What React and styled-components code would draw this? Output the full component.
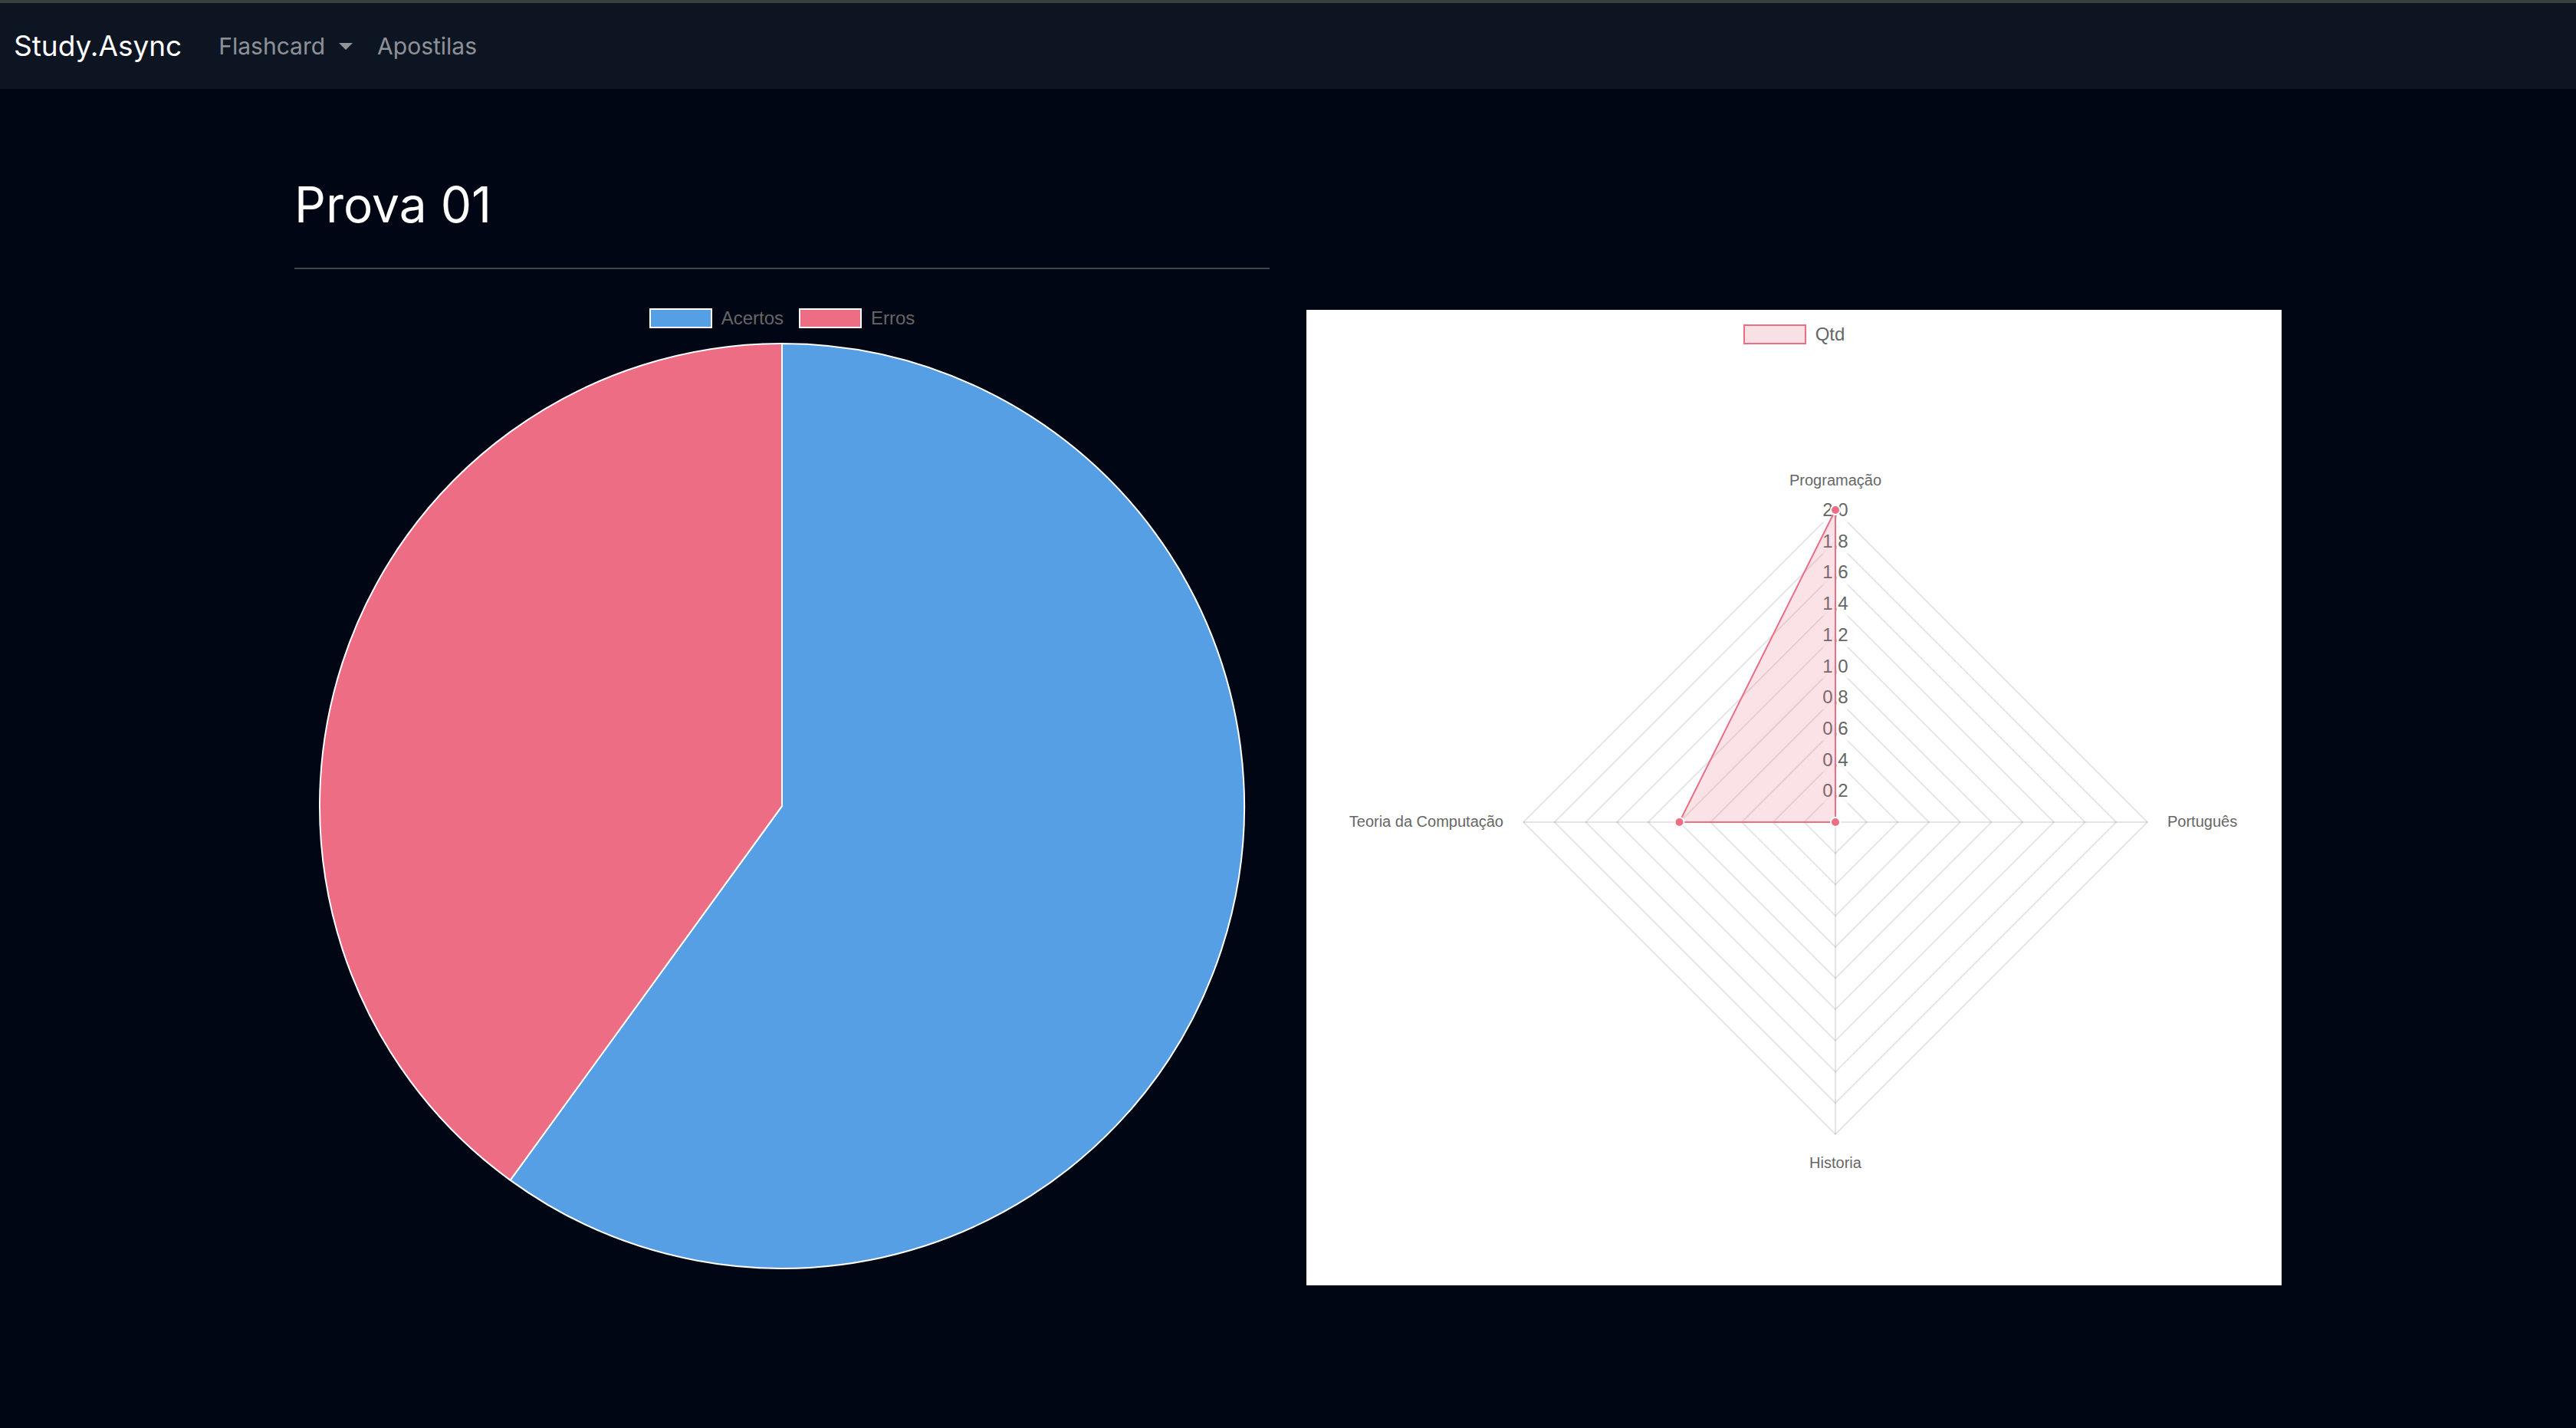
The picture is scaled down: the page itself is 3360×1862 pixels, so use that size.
import React from "react";
import styled, { createGlobalStyle } from "styled-components";

const colors = {
  page: "#000613",
  nav: "#0d1422",
  blue: "#579fe5",
  pink: "#ec6d84",
  label: "#666666",
};

const chartFont = `"Liberation Sans", Arial, sans-serif`;

const GlobalStyle = createGlobalStyle`
  *, *::before, *::after { box-sizing: border-box; }
  body {
    margin: 0;
    background: ${colors.page};
    color: #fff;
    font-family: Inter, Roboto, sans-serif;
  }
`;

const Navbar = styled.nav`
  display: flex;
  align-items: center;
  height: 116px;
  padding: 0 18px;
  background: ${colors.nav};
  border-top: 4px solid #38413d;
`;

const Brand = styled.a`
  margin-right: 48px;
  color: #fff;
  font-size: 37px;
  line-height: 60px;
  text-decoration: none;
`;

const NavList = styled.ul`
  display: flex;
  gap: 32px;
  margin: 0;
  padding: 0;
  list-style: none;
`;

const NavLink = styled.a`
  display: flex;
  align-items: center;
  gap: 18px;
  padding: 0;
  border: 0;
  background: none;
  color: rgba(255, 255, 255, 0.55);
  font: inherit;
  font-size: 30px;
  line-height: 48px;
  text-decoration: none;
  cursor: pointer;
`;

const Caret = styled.span`
  border-top: 9px solid currentColor;
  border-left: 9px solid transparent;
  border-right: 9px solid transparent;
`;

const Container = styled.main`
  display: grid;
  grid-template-columns: 1fr 1fr;
  align-items: start;
  gap: 48px;
  max-width: 2640px;
  margin: 0 auto;
  padding: 108px 24px 96px;
`;

const Title = styled.h1`
  margin: 0;
  font-size: 64px;
  font-weight: 400;
  line-height: 86px;
`;

const Divider = styled.hr`
  height: 2px;
  margin: 39px 0 32px;
  border: 0;
  background: #43464d;
`;

const Chart = styled.figure`
  margin: 0;
  font-family: ${chartFont};
`;

const RadarCard = styled(Chart)`
  margin-top: 180px;
  background: #fff;
`;

const Legend = styled.figcaption`
  display: flex;
  justify-content: center;
  gap: 20px;
  height: 64px;
  padding-top: 19px;
`;

const LegendItem = styled.span`
  display: flex;
  gap: 12px;
  height: 26px;
  color: ${colors.label};
  font-size: 24px;
  line-height: 26px;
`;

const Swatch = styled.span`
  width: 82px;
  border: 2px solid ${(p) => p.$border};
  background: ${(p) => p.$fill};
`;

const Plot = styled.svg`
  display: block;
  width: 100%;
  height: auto;
`;

const TickText = styled.text`
  fill: ${colors.label};
  font-size: 24px;
  text-anchor: middle;
`;

const PointLabel = styled.text`
  fill: ${colors.label};
  font-size: 20px;
`;

const RESULTS = [
  { label: "Acertos", value: 3, color: colors.blue },
  { label: "Erros", value: 2, color: colors.pink },
];

function PieChart() {
  const cx = 636;
  const cy = 604;
  const r = 603;
  const total = RESULTS.reduce((sum, d) => sum + d.value, 0);
  const at = (share) => {
    const a = share * 2 * Math.PI;
    return `${cx + r * Math.sin(a)} ${cy - r * Math.cos(a)}`;
  };
  let start = 0;
  const slices = RESULTS.map((d) => {
    const end = start + d.value / total;
    const large = end - start > 0.5 ? 1 : 0;
    const path = `M${cx} ${cy}L${at(start)}A${r} ${r} 0 ${large} 1 ${at(end)}Z`;
    start = end;
    return { ...d, path };
  });
  return (
    <Chart>
      <Legend>
        {RESULTS.map((d) => (
          <LegendItem key={d.label}>
            <Swatch $border="#fff" $fill={d.color} />
            {d.label}
          </LegendItem>
        ))}
      </Legend>
      <Plot viewBox="0 0 1272 1208" role="img" aria-label="Acertos e erros">
        {slices.map((s) => (
          <path key={s.label} d={s.path} fill={s.color} stroke="#fff" strokeWidth="2" strokeLinejoin="bevel" />
        ))}
      </Plot>
    </Chart>
  );
}

const SUBJECTS = [
  { label: "Programação", value: 2, x: 690, y: 165, anchor: "middle" },
  { label: "Português", value: 0, x: 1123, y: 610, anchor: "start" },
  { label: "Historia", value: 0, x: 690, y: 1055, anchor: "middle" },
  { label: "Teoria da Computação", value: 1, x: 257, y: 610, anchor: "end" },
];

function RadarChart() {
  const cx = 690;
  const cy = 604;
  const radius = 407;
  const max = 2;
  const directions = [[0, -1], [1, 0], [0, 1], [-1, 0]];
  const steps = Array.from({ length: 10 }, (_, i) => (i + 1) / 5);
  const point = (value, i) => {
    const d = (value / max) * radius;
    return [cx + directions[i][0] * d, cy + directions[i][1] * d];
  };
  const data = SUBJECTS.map((s, i) => point(s.value, i));
  return (
    <RadarCard>
      <Legend>
        <LegendItem>
          <Swatch $border={colors.pink} $fill="#f9e0e4" />
          Qtd
        </LegendItem>
      </Legend>
      <Plot viewBox="0 0 1272 1208" role="img" aria-label="Quantidade por matéria">
        <g fill="none" stroke="#000" strokeOpacity="0.1" strokeWidth="2">
          {steps.map((v) => (
            <polygon key={v} points={directions.map((_, i) => point(v, i).join(",")).join(" ")} />
          ))}
          {directions.map((_, i) => {
            const [x, y] = point(max, i);
            return <line key={i} x1={cx} y1={cy} x2={x} y2={y} />;
          })}
        </g>
        {SUBJECTS.map((s) => (
          <PointLabel key={s.label} x={s.x} y={s.y} textAnchor={s.anchor}>
            {s.label}
          </PointLabel>
        ))}
        {steps.map((v) => {
          const y = point(v, 0)[1];
          return (
            <g key={v}>
              <rect x={cx - 21} y={y - 16} width="42" height="32" fill="#fff" fillOpacity="0.75" />
              <TickText x={cx} y={y + 8}>{v.toFixed(1).replace(".", ",")}</TickText>
            </g>
          );
        })}
        <polygon
          points={data.map((p) => p.join(",")).join(" ")}
          fill={colors.pink}
          fillOpacity="0.2"
          stroke={colors.pink}
          strokeWidth="2"
          strokeLinejoin="bevel"
        />
        {data.map(([x, y], i) => (
          <circle key={i} cx={x} cy={y} r="6" fill={colors.pink} stroke="#fff" strokeWidth="2" />
        ))}
      </Plot>
    </RadarCard>
  );
}

export default function App() {
  return (
    <>
      <GlobalStyle />
      <Navbar>
        <Brand href="#">Study.Async</Brand>
        <NavList>
          <li>
            <NavLink as="button" type="button">
              Flashcard
              <Caret />
            </NavLink>
          </li>
          <li>
            <NavLink href="#">Apostilas</NavLink>
          </li>
        </NavList>
      </Navbar>
      <Container>
        <section>
          <Title>Prova 01</Title>
          <Divider />
          <PieChart />
        </section>
        <RadarChart />
      </Container>
    </>
  );
}
